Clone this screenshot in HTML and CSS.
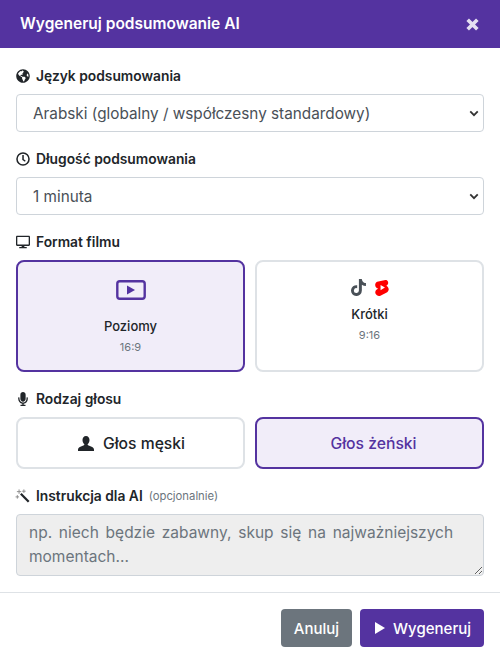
FILE: index.html
```html
<!DOCTYPE html>
<html>
<head>
<meta charset="utf-8" />
<title>Wygeneruj podsumowanie AI</title>
<link rel="stylesheet" href="styles.css">
</head>
<body>
<div class="modal">
	<div class="modalHeader">
		<h5 class="modalTitle">Wygeneruj podsumowanie AI</h5>
		<svg class="closeIcon" viewBox="0 0 14 14"><path d="M2.500 2.500l9 9M11.500 2.500l-9 9" /></svg>
	</div>
	<div class="modalBody">
		<div class="field">
			<label class="fieldLabel">
				<svg class="labelIcon" viewBox="0 0 496 512"><path d="M248 8C111.030 8 0 119.030 0 256s111.030 248 248 248 248-111.030 248-248S384.970 8 248 8zm82.290 357.600c-3.900 3.880-7.990 7.950-11.310 11.280-2.990 3-5.100 6.700-6.170 10.710-1.510 5.660-2.730 11.380-4.770 16.870l-17.390 46.850c-13.760 3-28 4.690-42.650 4.690v-27.380c1.690-12.620-7.640-36.260-22.630-51.250-6-6-9.370-14.140-9.370-22.630v-32.010c0-11.640-6.270-22.340-16.460-27.970-14.370-7.950-34.810-19.060-48.810-26.110-11.480-5.780-22.100-13.140-31.650-21.750l-.8-.72a114.792 114.792 0 0 1-18.060-20.740c-9.380-13.770-24.660-36.420-34.590-51.140 20.470-45.500 57.360-82.040 103.200-101.890l24.010 12.010C203.480 89.740 216 82.010 216 70.110v-11.300c7.990-1.290 16.120-2.110 24.430-2.420l28.300 28.300c6.250 6.250 6.250 16.380 0 22.630L264 112l-10.340 10.340c-3.120 3.120-3.120 8.190 0 11.310l4.690 4.690c3.120 3.120 3.120 8.190 0 11.310l-8 8a8.008 8.008 0 0 1-5.670 2.340h-8.990c-2.080 0-4.080.81-5.580 2.270l-9.920 9.650a8.008 8.008 0 0 0-1.580 9.310l15.590 31.190c2.660 5.320-1.210 11.580-7.150 11.580h-5.640c-1.930 0-3.790-.7-5.240-1.960l-9.280-8.060a16.017 16.017 0 0 0-15.550-3.100l-31.170 10.390a11.950 11.950 0 0 0-8.170 11.340c0 4.530 2.560 8.660 6.610 10.690l11.080 5.540c9.410 4.710 19.790 7.160 30.310 7.160s22.590 27.290 32 32h66.750c8.490 0 16.620 3.370 22.630 9.370l13.690 13.690a30.503 30.503 0 0 1 8.930 21.570 46.536 46.536 0 0 1-13.720 32.980zM417 274.250c-5.790-1.450-10.840-5-14.150-9.970l-17.980-26.970a23.970 23.970 0 0 1 0-26.620l19.590-29.380c2.320-3.470 5.500-6.280 9.240-8.150l12.980-6.490C440.200 193.590 448 223.870 448 256c0 8.670-.74 17.160-1.820 25.540L417 274.250z" /></svg>
				Język podsumowania
			</label>
			<div class="selectWrap">
				<select class="formSelect">
					<option>Arabski (globalny / współczesny standardowy)</option>
				</select>
				<svg class="chevron" viewBox="0 0 12 8"><path d="M1.500 1.500L6 6l4.500-4.500" /></svg>
			</div>
		</div>
		<div class="field">
			<label class="fieldLabel">
				<svg class="labelIcon" viewBox="0 0 512 512"><path d="M256 8a248 248 0 1 0 0 496 248 248 0 0 0 0-496zm0 440a192 192 0 1 1 0-384 192 192 0 0 1 0 384zm59-100l-81-59c-3-2-5-6-5-10V120c0-7 5-12 12-12h32c7 0 12 5 12 12v141l64 46c5 4 6 11 3 17l-19 26c-4 5-12 6-18 3z" /></svg>
				Długość podsumowania
			</label>
			<div class="selectWrap">
				<select class="formSelect">
					<option>1 minuta</option>
				</select>
				<svg class="chevron" viewBox="0 0 12 8"><path d="M1.500 1.500L6 6l4.500-4.500" /></svg>
			</div>
		</div>
		<div class="field">
			<label class="fieldLabel">
				<svg class="labelIcon" viewBox="0 0 576 512"><path d="M528 0H48C22 0 0 22 0 48v320c0 26 22 48 48 48h192l-16 48h-72c-13 0-24 11-24 24s11 24 24 24h272c13 0 24-11 24-24s-11-24-24-24h-72l-16-48h192c26 0 48-22 48-48V48c0-26-22-48-48-48zm-6 362H54V54h468z" /></svg>
				Format filmu
			</label>
			<div class="cardRow">
				<div class="formatCard active">
					<div class="cardIcons">
						<svg class="playIcon" viewBox="0 0 30 20"><rect x="1.300" y="1.300" width="27.400" height="17.400" rx="2.500" /><path class="fillPart" d="M11 5.500v9l8-4.500z" /></svg>
					</div>
					<div class="cardName">Poziomy</div>
					<div class="cardRatio">16:9</div>
				</div>
				<div class="formatCard shortCard">
					<div class="cardIcons">
						<svg class="tiktokIcon" viewBox="0 0 448 512"><path d="M448 209.900a210 210 0 0 1-123-39.300v179A163 163 0 1 1 184 187.900v90.200a74.600 74.600 0 1 0 52.200 71.200V0h88.700a121 121 0 0 0 1.900 22.200 123 123 0 0 0 54.400 81 122.400 122.400 0 0 0 67.800 20.500z" /></svg>
						<svg class="shortsIcon" viewBox="0 0 24 28"><path d="M17.800 1.300c2.700-1.400 5.200 2.500 4.800 5.200-.3 2-1.700 3.600-3.500 4.700 2.600 1 4.400 3.400 4.400 6 0 2.300-1.400 4.400-3.400 5.500L9.300 28c-3.100 1.500-7-.2-8.300-3.100-1.400-3.100-.1-6.500 2.800-8.100l1.800-.9C2.300 15 .3 12.500.3 9.500c0-2.300 1.400-4.400 3.400-5.500z" /><path class="playCut" d="M9.500 9.500v9l7.500-4.500z" /></svg>
					</div>
					<div class="cardName">Krótki</div>
					<div class="cardRatio">9:16</div>
				</div>
			</div>
		</div>
		<div class="field">
			<label class="fieldLabel">
				<svg class="labelIcon" viewBox="0 0 352 512"><path d="M176 352c53 0 96-43 96-96V96c0-53-43-96-96-96S80 43 80 96v160c0 53 43 96 96 96zm160-160h-16c-9 0-16 7-16 16v48c0 75-65 135-141 127-66-6-115-66-115-132v-43c0-9-7-16-16-16H16c-9 0-16 7-16 16v40c0 90 64 170 152 182v34H96c-9 0-16 7-16 16v16c0 9 7 16 16 16h160c9 0 16-7 16-16v-16c0-9-7-16-16-16h-56v-34c86-12 152-86 152-174v-48c0-9-7-16-16-16z" /></svg>
				Rodzaj głosu
			</label>
			<div class="cardRow">
				<div class="voiceCard">
					<svg class="userIcon" viewBox="0 0 16 15"><path d="M8 0c2.200 0 3.500 1.700 3.500 4 0 1.800-.7 3.200-1.600 4-.4.400-.3 1 .2 1.300l3.500 1.500c1.500.6 2.400 1.600 2.400 3v1.200H0v-1.200c0-1.400.9-2.400 2.400-3l3.500-1.500c.5-.3.6-.9.200-1.300-.9-.8-1.600-2.200-1.600-4C4.500 1.700 5.800 0 8 0z" /></svg>
					Głos męski
				</div>
				<div class="voiceCard active">Głos żeński</div>
			</div>
		</div>
		<div class="field lastField">
			<label class="fieldLabel">
				<svg class="wandIcon" viewBox="0 0 16 16"><path class="wandStick" d="M5.500 5.500l9 9" /><path class="wandSpark" d="M3.500.5v5M1 3h5M9 .5v4M7 2.500h4M1.500 7v4M-.5 9h4" /></svg>
				Instrukcja dla AI <span class="optional">(opcjonalnie)</span>
			</label>
			<textarea class="formText" rows="2" placeholder="np. niech będzie zabawny, skup się na najważniejszych momentach..." disabled></textarea>
		</div>
	</div>
	<div class="modalFooter">
		<button class="btn btnGray">Anuluj</button>
		<button class="btn btnPurple">
			<svg class="btnPlay" viewBox="0 0 10 12"><path d="M0 0v12l10-6z" /></svg>
			Wygeneruj
		</button>
	</div>
</div>
</body>
</html>
```

FILE: styles.css
```css
* { box-sizing: border-box; }
html, body { margin: 0; height: 100%; }
body {
	background: #fff;
	color: #212529;
	font-family: Inter, "Noto Sans", Arial, sans-serif;
	font-size: 16px;
}
.modal { width: 500px; height: 663px; display: flex; flex-direction: column; overflow: hidden; }

.modalHeader {
	height: 48px;
	background: #5433a0;
	color: #fff;
	display: flex;
	align-items: center;
	justify-content: space-between;
	padding: 0 20px;
	flex-shrink: 0;
}
.modalTitle { margin: 0; font-size: 15.500px; font-weight: 600; line-height: 24px; }
.closeIcon { width: 15px; height: 15px; fill: none; stroke: #e4dff1; stroke-width: 3.400; }

.modalBody { padding: 18px 16px 0; flex: 1; }
.field { margin-bottom: 17px; }
.lastField { margin-bottom: 0; }
.fieldLabel {
	display: flex;
	align-items: center;
	height: 20px;
	margin-bottom: 8px;
	font-size: 13.800px;
	font-weight: 600;
	line-height: 20px;
}
.labelIcon { width: 14px; height: 14px; margin-right: 6px; fill: #212529; }
.wandIcon { width: 14px; height: 14px; margin-right: 6px; fill: none; overflow: visible; }
.wandStick { stroke: #212529; stroke-width: 2.600; }
.wandSpark { stroke: #8a8a8a; stroke-width: 1.100; }
.optional { margin-left: 6px; font-size: 11.300px; font-weight: 400; color: #6c757d; }

.selectWrap { position: relative; }
.formSelect {
	display: block;
	width: 100%;
	height: 38px;
	padding: 0 16px;
	border: 1px solid #ced4da;
	border-radius: 4px;
	background: #fff;
	color: #495057;
	font-family: inherit;
	font-size: 15.300px;
	appearance: none;
}
.chevron {
	position: absolute;
	right: 5px;
	top: 16px;
	width: 10px;
	height: 7px;
	fill: none;
	stroke: #333;
	stroke-width: 2.200;
}

.cardRow { display: grid; grid-template-columns: 229px 229px; gap: 10px; }
.formatCard {
	height: 112px;
	border: 2px solid #dee2e6;
	border-radius: 8px;
	background: #fff;
	display: flex;
	flex-direction: column;
	align-items: center;
	padding-top: 18px;
}
.formatCard.active { border-color: #5433a0; background: #f1edf9; }
.cardIcons { height: 28px; display: flex; align-items: flex-start; gap: 9px; }
.shortCard { padding-top: 17px; }
.shortCard .cardIcons { height: 24px; }
.playIcon { width: 30px; height: 20px; fill: none; stroke: #5433a0; stroke-width: 2.400; }
.playIcon .fillPart { fill: #5433a0; stroke: none; }
.tiktokIcon { width: 15px; height: 17px; fill: #495057; }
.shortsIcon { width: 14px; height: 17px; fill: #ff0000; }
.playCut { fill: #fff; }
.cardName { font-size: 13px; font-weight: 500; line-height: 20px; margin-top: 8px; }
.shortCard .cardName { margin-top: 1px; }
.cardRatio { font-size: 11px; color: #6c757d; line-height: 16px; margin-top: 3px; }

.voiceCard {
	height: 52px;
	padding-left: 2px;
	border: 2px solid #dee2e6;
	border-radius: 8px;
	background: #fff;
	display: flex;
	align-items: center;
	justify-content: center;
	font-size: 15.700px;
	font-weight: 500;
}
.voiceCard.active { border-color: #5433a0; background: #f1edf9; color: #5433a0; padding-left: 8px; }
.userIcon { width: 16px; height: 15px; margin-right: 9px; fill: #212529; }

.formText {
	display: block;
	width: 100%;
	height: 62px;
	padding: 6px 12px;
	border: 1px solid #ced4da;
	border-radius: 4px;
	background: #eeeeee;
	font-family: inherit;
	font-size: 15.500px;
	word-spacing: 2.400px;
	line-height: 24px;
	resize: vertical;
}
.formText::placeholder { color: #6c757d; opacity: 1; }

.modalFooter {
	height: 71px;
	border-top: 1px solid #dee2e6;
	display: flex;
	align-items: center;
	justify-content: flex-end;
	gap: 8px;
	padding: 0 16px;
	flex-shrink: 0;
}
.btn {
	height: 38px;
	padding: 0 13px;
	border: 0;
	border-radius: 4px;
	color: #fff;
	font-family: inherit;
	font-size: 15px;
	font-weight: 500;
	display: flex;
	align-items: center;
}
.btnGray { background: #6c757d; }
.btnPurple { background: #5433a0; padding: 0 13px 0 15px; }
.btnPlay { width: 10px; height: 12px; margin-right: 8px; fill: #fff; }
```
